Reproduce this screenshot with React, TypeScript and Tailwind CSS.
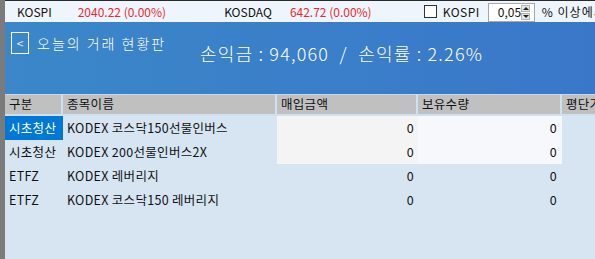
import React from "react";

const font = { fontFamily: '"Noto Sans CJK KR", "Noto Sans", sans-serif' };

type Row = { cat: string; name: string; buy: string; qty: string; hi: boolean; sel: boolean };

const rows: Row[] = [
  { cat: "시초청산", name: "KODEX 코스닥150선물인버스", buy: "0", qty: "0", hi: true, sel: true },
  { cat: "시초청산", name: "KODEX 200선물인버스2X", buy: "0", qty: "0", hi: true, sel: false },
  { cat: "ETFZ", name: "KODEX 레버리지", buy: "0", qty: "0", hi: false, sel: false },
  { cat: "ETFZ", name: "KODEX 코스닥150 레버리지", buy: "0", qty: "0", hi: false, sel: false },
];

export default function App() {
  return (
    <div className="flex w-[595px] h-[259px] overflow-hidden bg-[#d7e5f3]" style={font}>
      <div className="w-[5px] h-full bg-[#7b7b7b] shrink-0" />
      <div className="flex flex-col flex-1 min-w-0">
        {/* top bar */}
        <div className="h-[22px] shrink-0 flex items-center bg-[#eef5fc] border-t border-[#2a2a2a] text-[12px] leading-none whitespace-nowrap text-[#111]">
          <span className="ml-[12px]">KOSPI</span>
          <span className="ml-[26px] text-[#f0282d]">2040.22 (0.00%)</span>
          <span className="ml-[58px]">KOSDAQ</span>
          <span className="ml-[18px] text-[#f0282d]">642.72 (0.00%)</span>
          <span className="ml-[52px] w-[13px] h-[13px] border border-[#333] bg-white shrink-0" />
          <span className="ml-[6px] tracking-[0.5px]">KOSPI</span>
          <div className="ml-[8px] w-[47px] h-[19px] mt-[1px] border border-[#a8a8a8] bg-white flex items-stretch shrink-0">
            <span className="flex-1 pl-[9px] pt-[2px] text-[12px] leading-none">0,05</span>
            <div className="w-[11px] my-[1px] mr-[4px] flex flex-col gap-[1px]">
              <div className="flex-1 bg-[#e6e6e6] border border-[#b5b5b5] flex items-center justify-center">
                <div className="w-0 h-0 border-l-[3px] border-r-[3px] border-b-[3px] border-l-transparent border-r-transparent border-b-[#222]" />
              </div>
              <div className="flex-1 bg-[#e6e6e6] border border-[#b5b5b5] flex items-center justify-center">
                <div className="w-0 h-0 border-l-[3px] border-r-[3px] border-t-[3px] border-l-transparent border-r-transparent border-t-[#222]" />
              </div>
            </div>
          </div>
          <span className="ml-[7px] tracking-[1px]">% 이상에서</span>
        </div>
        {/* blue header */}
        <div className="h-[72px] shrink-0 flex items-start bg-gradient-to-r from-[#3b87c9] to-[#3a77c9] text-white whitespace-nowrap">
          <div className="w-[195px] shrink-0 flex items-center pl-[6px] pt-[10px]">
            <div className="w-[18px] h-[22px] border border-white flex items-center justify-center text-[12px] leading-none text-[#dfe9ff]">&lt;</div>
            <span className="ml-[8px] text-[14px] font-light tracking-[2px] leading-none">오늘의 거래 현황판</span>
          </div>
          <div className="mt-[22px] text-[18px] font-light leading-none tracking-[1.2px]">
            손익금 : 94,060&nbsp;&nbsp;/&nbsp;&nbsp;손익률 : 2.26%
          </div>
        </div>
        {/* table */}
        <div className="grid grid-cols-[58px_214px_141px_144px_1fr] text-[12.5px] tracking-[0.3px] text-[#111] whitespace-nowrap">
          {["구분", "종목이름", "매입금액", "보유수량", "평단가"].map((h, i) => (
            <div
              key={h}
              className={
                "h-[22px] bg-[#c0c0c0] border-t border-[#c8d8ea] border-b-[2px] border-b-[#d0e0f0] flex items-center pl-[4px] overflow-hidden " +
                (i < 4 ? "border-r-[2px] border-r-[#d0e0f0]" : "")
              }
            >
              {h}
            </div>
          ))}
          {rows.map((r, idx) => (
            <React.Fragment key={idx}>
              <div
                className={
                  "h-[24px] flex items-center pl-[4px] " +
                  (r.sel ? "bg-[#0078d7] text-white" : "")
                }
              >
                {r.cat}
              </div>
              <div className="h-[24px] flex items-center pl-[4px]">{r.name}</div>
              <div className={"h-[24px] flex items-center justify-end pr-[4px] " + (r.hi ? "bg-[#f4f4f4]" : "")}>
                {r.buy}
              </div>
              <div className={"h-[24px] flex items-center justify-end pr-[5px] " + (r.hi ? "bg-[#f7f8fc]" : "")}>
                {r.qty}
              </div>
              <div className="h-[24px]" />
            </React.Fragment>
          ))}
        </div>
      </div>
    </div>
  );
}
